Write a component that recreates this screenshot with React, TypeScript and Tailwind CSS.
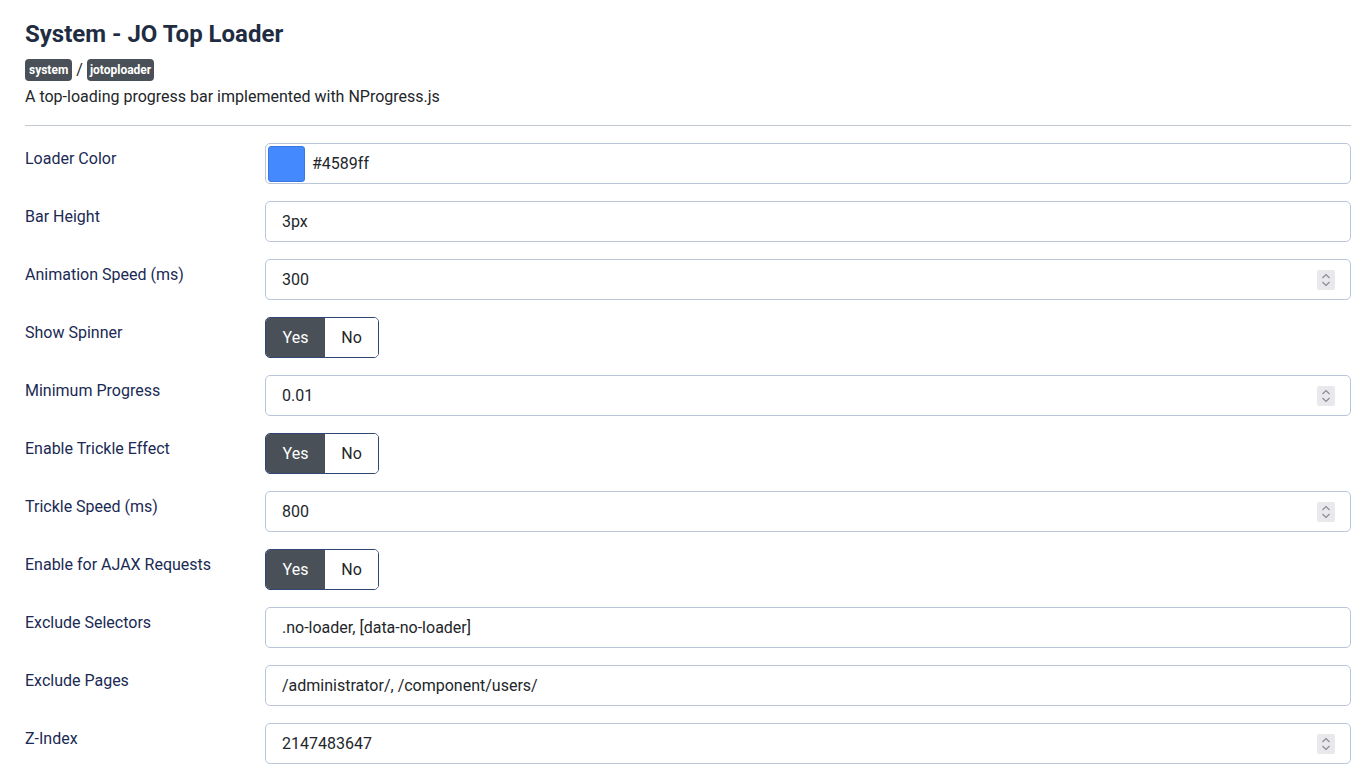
import { useState } from "react";

type Field =
  | { label: string; kind: "color"; value: string }
  | { label: string; kind: "text"; value: string }
  | { label: string; kind: "number"; value: string }
  | { label: string; kind: "toggle"; value: boolean };

const fields: Field[] = [
  { label: "Loader Color", kind: "color", value: "#4589ff" },
  { label: "Bar Height", kind: "text", value: "3px" },
  { label: "Animation Speed (ms)", kind: "number", value: "300" },
  { label: "Show Spinner", kind: "toggle", value: true },
  { label: "Minimum Progress", kind: "number", value: "0.01" },
  { label: "Enable Trickle Effect", kind: "toggle", value: true },
  { label: "Trickle Speed (ms)", kind: "number", value: "800" },
  { label: "Enable for AJAX Requests", kind: "toggle", value: true },
  { label: "Exclude Selectors", kind: "text", value: ".no-loader, [data-no-loader]" },
  { label: "Exclude Pages", kind: "text", value: "/administrator/, /component/users/" },
  { label: "Z-Index", kind: "number", value: "2147483647" },
];

const inputClass =
  "h-[41px] w-full rounded-[5px] border border-[#b9c6da] bg-white px-4 text-[16px] text-[#22262a] outline-none [appearance:textfield] [&::-webkit-inner-spin-button]:appearance-none [&::-webkit-outer-spin-button]:appearance-none";

function Toggle({ initial }: { initial: boolean }) {
  const [on, setOn] = useState(initial);
  return (
    <div className="flex h-[41px] w-[114px] overflow-hidden rounded-[5px] border border-[#2f4775]">
      <button
        type="button"
        onClick={() => setOn(true)}
        className={`w-[59px] text-[16px] ${on ? "bg-[#495057] text-white" : "bg-white text-[#22262a]"}`}
      >
        Yes
      </button>
      <button
        type="button"
        onClick={() => setOn(false)}
        className={`flex-1 text-[16px] ${!on ? "bg-[#495057] text-white" : "bg-white text-[#22262a]"}`}
      >
        No
      </button>
    </div>
  );
}

function Spinner() {
  return (
    <div className="pointer-events-none absolute right-[16px] top-1/2 flex h-[20px] w-[18px] -translate-y-1/2 flex-col items-center justify-center gap-[2px] rounded-[2px] bg-[#e9e9ed]">
      <svg width="10" height="6" viewBox="0 0 10 6" fill="none">
        <path d="M1.5 5 L5 1.5 L8.5 5" stroke="#8a8a92" strokeWidth="1.2" />
      </svg>
      <svg width="10" height="6" viewBox="0 0 10 6" fill="none">
        <path d="M1.5 1 L5 4.5 L8.5 1" stroke="#8a8a92" strokeWidth="1.2" />
      </svg>
    </div>
  );
}

function Control({ field }: { field: Field }) {
  if (field.kind === "toggle") return <Toggle initial={field.value} />;
  if (field.kind === "color") {
    return (
      <div className="flex h-[41px] w-full items-center gap-[7px] rounded-[5px] border border-[#b9c6da] bg-white pl-[2px]">
        <div className="h-[36px] w-[37px] rounded-[3px] border border-[#3a78e0] bg-[#4589ff]" />
        <span className="text-[16px] text-[#22262a]">{field.value}</span>
      </div>
    );
  }
  if (field.kind === "number") {
    return (
      <div className="relative">
        <input type="number" defaultValue={field.value} className={inputClass} />
        <Spinner />
      </div>
    );
  }
  return <input type="text" defaultValue={field.value} className={inputClass} />;
}

export default function App() {
  return (
    <div className="h-screen overflow-hidden bg-white pl-[25px] pr-[12px] pt-[19px] font-['Roboto',sans-serif] text-[16px] text-[#22262a]">
      <h1 className="text-[24px] font-bold leading-[30px] text-[#1f2d42]">System - JO Top Loader</h1>
      <div className="mt-[10px] flex items-center gap-[4px]">
        <span className="rounded-[4px] bg-[#495057] px-[4px] text-[12px] font-bold leading-[22px] text-white">
          system
        </span>
        <span className="text-[16px] leading-[22px]">/</span>
        <span className="rounded-[4px] bg-[#495057] px-[3px] text-[12px] font-bold leading-[22px] text-white">
          jotoploader
        </span>
      </div>
      <p className="mt-[4px] leading-[24px]">A top-loading progress bar implemented with NProgress.js</p>
      <hr className="mt-[16px] border-t border-[#c2c8d0]" />
      <div className="mt-[17px] flex flex-col gap-[17px]">
        {fields.map((f) => (
          <div key={f.label} className="flex items-start">
            <label className="w-[240px] shrink-0 pt-[4px] leading-[24px] text-[#1a2a54]">{f.label}</label>
            <div className="flex-1">
              <Control field={f} />
            </div>
          </div>
        ))}
      </div>
    </div>
  );
}
